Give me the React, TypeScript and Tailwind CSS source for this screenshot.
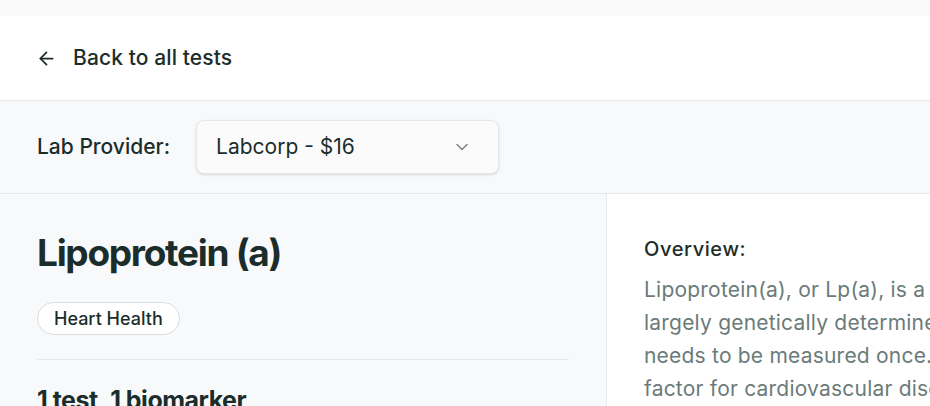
import { ArrowLeft, ChevronDown } from 'lucide-react'

const overview = [
  'Lipoprotein(a), or Lp(a), is a type of lipoprotein that is',
  'largely genetically determined, so it typically only',
  'needs to be measured once. It is an independent risk',
  'factor for cardiovascular disease and stroke.',
]

export default function App() {
  return (
    <div
      className="min-h-screen w-[930px] overflow-hidden bg-[#f9f9f9] pt-4 text-[#1b2d2a]"
      style={{ fontFamily: 'Inter, "Noto Sans", sans-serif' }}
    >
      <div className="flex h-[85px] items-center border-b border-[#e6e8eb] bg-white px-9">
        <button type="button" className="flex items-center gap-[16px] text-[21px] font-medium tracking-[0.005em]">
          <ArrowLeft size={21} strokeWidth={2} className="text-[#1b2d2a]" />
          Back to all tests
        </button>
      </div>

      <div className="flex h-[93px] items-center gap-[26px] border-b border-[#e6e8eb] bg-[#f8f9fb] px-[37px]">
        <span className="text-[21px] font-medium">Lab Provider:</span>
        <div className="flex h-[54px] w-[303px] items-center justify-between rounded-lg border border-[#e4e6ea] bg-[#fbfbfc] pl-[19px] pr-[26px] shadow-sm">
          <span className="text-[21px]">Labcorp - $16</span>
          <ChevronDown size={20} strokeWidth={1.75} className="text-[#7b8184]" />
        </div>
      </div>

      <div className="flex">
        <div className="w-[607px] shrink-0 border-r border-[#e6e8eb] bg-[#f8f9fb] pl-[37px] pr-[37px] pt-[33px]">
          <h1 className="text-[37px] font-bold leading-[52px] tracking-[-0.035em]">Lipoprotein (a)</h1>
          <div className="mt-[23px] flex">
            <span className="flex h-[33px] items-center rounded-full border border-[#d9dcdf] bg-white px-[16px] text-[18px] font-medium">
              Heart Health
            </span>
          </div>
          <div className="mt-6 h-px bg-[#e6e8eb]" />
          <h2 className="mt-[22px] text-[25px] font-bold tracking-[-0.02em]">1 test, 1 biomarker</h2>
        </div>

        <div className="flex-1 bg-white pl-[37px] pt-[40px]">
          <h3 className="text-[20px] font-medium leading-[30px] tracking-[0.03em]">Overview:</h3>
          <p className="mt-[9px] text-[21px] leading-[33px] tracking-[0.01em] text-[#6b7b79]">
            {overview.map((line) => (
              <span key={line} className="block whitespace-nowrap">
                {line}
              </span>
            ))}
          </p>
        </div>
      </div>
    </div>
  )
}
